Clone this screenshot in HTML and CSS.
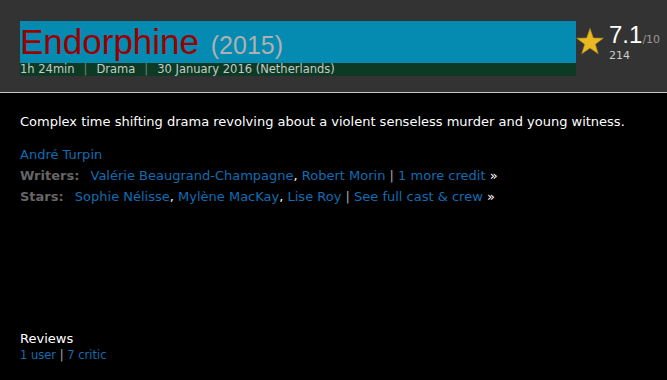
FILE: index.html
```html
<!DOCTYPE html>
<html lang="en">
<head>
    <meta charset="UTF-8">
    <meta name="viewport" content="width=device-width, initial-scale=1.0">
    <title>Endorphine (2015)</title>
    <link rel="stylesheet" href="styles.css">
</head>
<body>

<div class="header">
    <div class="title-block">
        <h1 class="title-bar">Endorphine <span class="year">(2015)</span></h1>
        <div class="meta">
            1h 24min<span class="sep">|</span>Drama<span class="sep">|</span>30 January 2016 (Netherlands)
        </div>
    </div>

    <div class="rating">
        <svg class="star" width="28" height="27" viewBox="0 0 28 27">
            <polygon points="14,0.5 17.3,10 27.3,10.2 19.3,16.2 22.2,25.8 14,20.1 5.8,25.8 8.7,16.2 0.7,10.2 10.7,10" fill="#e8b923" stroke="#b8901a" stroke-width="0.6"/>
        </svg>
        <div class="score">
            <div class="score-value">7.1<span class="score-max">/10</span></div>
            <div class="score-count">214</div>
        </div>
    </div>
</div>

<div class="content">
    <p class="plot">Complex time shifting drama revolving about a violent senseless murder and young witness.</p>

    <div class="credit"><a href="#">André Turpin</a></div>
    <div class="credit">
        <span class="label">Writers:</span>
        <a href="#">Valérie Beaugrand-Champagne</a>, <a href="#">Robert Morin</a> <span class="pipe">|</span> <a href="#">1 more credit</a> <span class="more">»</span>
    </div>
    <div class="credit">
        <span class="label">Stars:</span>
        <a href="#">Sophie Nélisse</a>, <a href="#">Mylène MacKay</a>, <a href="#">Lise Roy</a> <span class="pipe">|</span> <a href="#">See full cast &amp; crew</a> <span class="more">»</span>
    </div>

    <div class="reviews">
        <div class="reviews-title">Reviews</div>
        <div class="reviews-links"><a href="#">1 user</a> <span class="pipe">|</span> <a href="#">7 critic</a></div>
    </div>
</div>

</body>
</html>
```

FILE: styles.css
```css
body {
    margin: 0;
    background: #000;
    font-family: 'DejaVu Sans', Verdana, sans-serif;
    color: #fff;
}
a {
    color: #136cb2;
    text-decoration: none;
}
.header {
    display: flex;
    box-sizing: border-box;
    height: 93px;
    padding: 21px 0 0 20px;
    background: #333;
    border-bottom: 1px solid #c8c8c8;
}
.title-block {
    width: 556px;
}
.title-bar {
    margin: 0;
    height: 42px;
    line-height: 42px;
    background: #058ab1;
    font-family: 'Liberation Sans', Arial, sans-serif;
    font-weight: normal;
    font-size: 35px;
    color: #990000;
    white-space: nowrap;
}
.year {
    margin-left: 2px;
    font-size: 25px;
    color: #b0b0b0;
}
.meta {
    height: 13px;
    line-height: 13px;
    background: #0c3a25;
    font-size: 11.5px;
    color: #c4cbc4;
    white-space: nowrap;
}
.sep {
    margin: 0 9px;
    color: #7a7a7a;
}
.rating {
    display: flex;
}
.star {
    margin-top: 7px;
}
.score {
    margin-left: 5px;
    margin-top: 2px;
}
.score-value {
    font-family: 'Liberation Sans', Arial, sans-serif;
    font-size: 24px;
    line-height: 24px;
    color: #fff;
}
.score-max {
    font-family: 'DejaVu Sans', Verdana, sans-serif;
    font-size: 11px;
    color: #999;
}
.score-count {
    margin-top: -2px;
    font-size: 11px;
    line-height: 12px;
    color: #ccc;
}
.content {
    padding: 0 20px;
    font-size: 13px;
}
.plot {
    margin: 20px 0 14px;
    line-height: 17px;
}
.credit {
    line-height: 21px;
    white-space: nowrap;
}
.label {
    font-weight: bold;
    color: #666;
    margin-right: 7px;
}
.pipe {
    color: #aaa;
}
.more {
    color: #fff;
}
.reviews {
    margin-top: 123px;
}
.reviews-title {
    line-height: 17px;
}
.reviews-links {
    margin-top: 1px;
    font-size: 11.5px;
    line-height: 15px;
}
```
